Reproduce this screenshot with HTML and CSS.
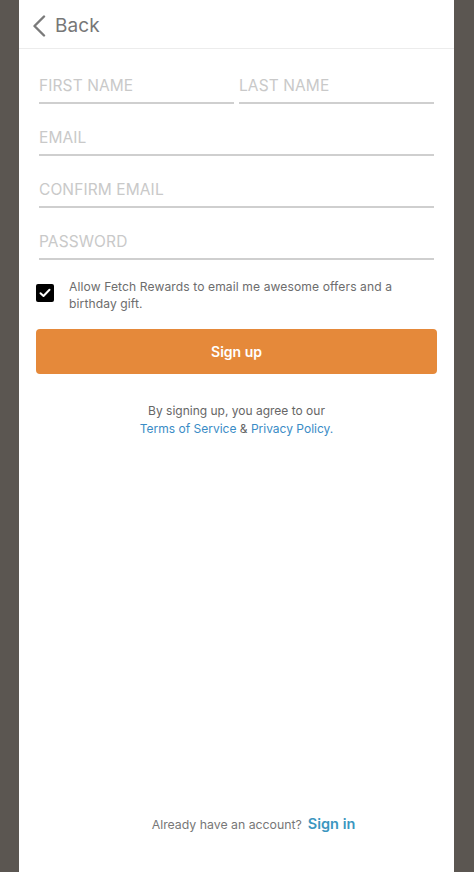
FILE: index.html
```html
<!DOCTYPE html>
<html>
<head>
<meta charset="utf-8">
<link rel="stylesheet" href="styles.css">
</head>
<body>
<div class="panel">
  <header class="topbar">
    <svg class="chev" width="14" height="22" viewBox="0 0 14 22"><path d="M12 1.5 L2.5 11 L12 20.5" fill="none" stroke="#7a7a7a" stroke-width="2.4" stroke-linecap="round" stroke-linejoin="round"/></svg>
    <span class="back">Back</span>
  </header>
  <form class="form">
    <div class="row">
      <div class="field"><span class="ph">FIRST NAME</span></div>
      <div class="field"><span class="ph">LAST NAME</span></div>
    </div>
    <div class="field"><span class="ph">EMAIL</span></div>
    <div class="field"><span class="ph">CONFIRM EMAIL</span></div>
    <div class="field"><span class="ph">PASSWORD</span></div>
    <div class="consent">
      <span class="box"><svg width="12" height="10" viewBox="0 0 12 10"><path d="M1.5 5.2 L4.5 8 L10.5 1.8" fill="none" stroke="#fff" stroke-width="2" stroke-linecap="round" stroke-linejoin="round"/></svg></span>
      <p class="consent-text">Allow Fetch Rewards to email me awesome offers and a birthday gift.</p>
    </div>
    <div class="btn">Sign up</div>
    <p class="terms">By signing up, you agree to our<br><a class="link">Terms of Service</a> &amp; <a class="link">Privacy Policy.</a></p>
  </form>
  <footer class="footer">
    <span class="already">Already have an account?</span>
    <a class="signin">Sign in</a>
  </footer>
</div>
</body>
</html>
```
FILE: styles.css
```css
html, body {
  margin: 0;
  padding: 0;
  background: #5b5651;
  height: 872px;
  overflow: hidden;
  font-family: Inter, "Noto Sans", sans-serif;
}
.panel {
  margin-left: 19px;
  width: 435px;
  height: 872px;
  background: #fff;
  display: flex;
  flex-direction: column;
}
.topbar {
  height: 49px;
  box-sizing: border-box;
  border-bottom: 1px solid #ececec;
  display: flex;
  align-items: center;
  padding-left: 13px;
  padding-top: 3px;
}
.chev { display: block; margin-top: 0; }
.back {
  font-size: 19px;
  color: #777;
  margin-left: 9px;
  letter-spacing: 0.1px;
}
.form {
  padding: 3px 20px 0 20px;
  display: flex;
  flex-direction: column;
}
.row {
  display: flex;
  gap: 5px;
}
.row .field { flex: 1; }
.field {
  height: 52px;
  box-sizing: border-box;
  border-bottom: 2px solid #cfcfcf;
  display: flex;
  align-items: flex-end;
  padding-bottom: 7px;
}
.ph {
  font-size: 15.5px;
  color: #c9c9c9;
  letter-spacing: 0.1px;
}
.consent {
  display: flex;
  align-items: flex-start;
  margin-top: 18px;
  margin-left: -3px;
}
.box {
  width: 18px;
  height: 18px;
  background: #000;
  border-radius: 2px;
  display: flex;
  align-items: center;
  justify-content: center;
  flex: none;
  margin-top: 6px;
}
.consent-text {
  margin: 0 0 0 15px;
  font-size: 12.1px;
  line-height: 17px;
  color: #6d6d6d;
  letter-spacing: 0.1px;
}
.btn {
  margin: 17px -3px 0 -3px;
  height: 45px;
  border-radius: 4px;
  background: #e5893a;
  color: #fff;
  font-weight: 600;
  font-size: 14px;
  display: flex;
  align-items: center;
  justify-content: center;
}
.terms {
  margin: 28px 0 0 0;
  text-align: center;
  font-size: 12px;
  line-height: 18px;
  color: #666;
}
.link { color: #3a8cc6; }
.footer {
  margin-top: auto;
  padding-bottom: 40px;
  display: flex;
  justify-content: center;
  align-items: baseline;
  gap: 6px;
  padding-left: 34px;
}
.already {
  font-size: 12.3px;
  color: #777;
}
.signin {
  font-size: 14.5px;
  font-weight: 600;
  color: #3b96c0;
}
```
